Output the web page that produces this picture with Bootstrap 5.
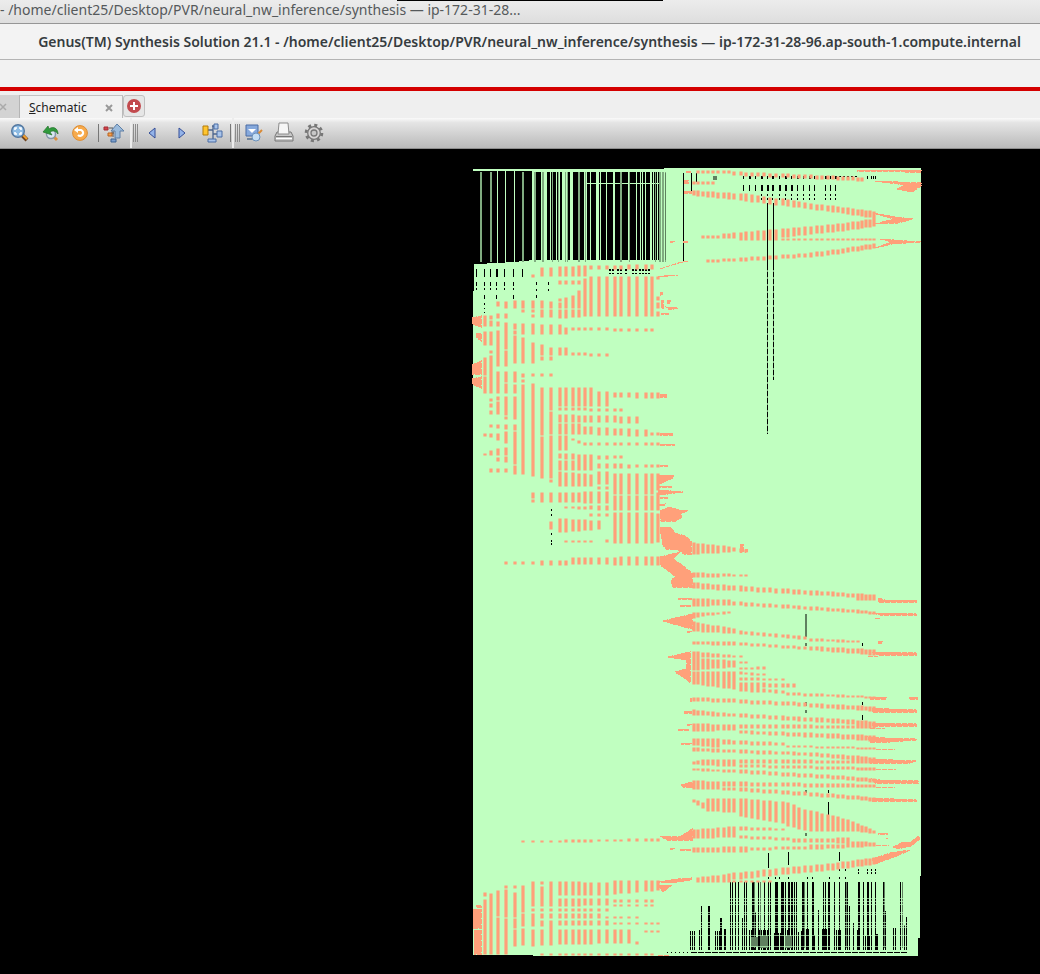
<!DOCTYPE html>
<html lang="en">
<head>
<meta charset="utf-8">
<meta name="viewport" content="width=device-width, initial-scale=1">
<title>Genus(TM) Synthesis Solution 21.1</title>
<link href="https://cdn.jsdelivr.net/npm/bootstrap@5.3.0/dist/css/bootstrap.min.css" rel="stylesheet">
<style>
body{background:#000;font-family:"Noto Sans","Open Sans",sans-serif;color:#2e3436}
.back-title{height:24px;background:linear-gradient(#ececec,#dedede);border-bottom:1px solid #969696;font-size:14px;line-height:20px;color:#55595b}
.top-edge{left:397px;top:0;width:266px;height:1px;background:#000}
.win-title{height:36px;background:#f3f3f3;border-bottom:1px solid #b4b4b4;font-size:14px;line-height:36px;font-weight:600;color:#363c3f;padding-left:19px}
.menu-strip{height:27px;background:#f2f2f2}
.tab-strip{height:31px;border-top:4px solid #d40000;background:#efefef}
.old-tab{width:20px;background:#d3d3d3;border-right:1px solid #b5b5b5;margin-top:4px;color:#aaa}
.cur-tab{width:103px;margin-top:4px;background:#f1f1f1;border-top:1px solid #c2c2c2;border-right:1px solid #bbb;font-size:12px;line-height:24px;padding-left:9px;color:#222}
.tool{background:none;border:0;padding:0;width:30px;height:28px;display:flex;align-items:center;justify-content:center;flex:none}
.cur-tab .tool{width:10px;height:23px}
.tab-strip .add-tab{width:22px;height:22px;border:1px solid #c0c0c0;border-radius:3px;background:#e6e6e6;margin:4px 0 0 0}
.tool-strip{height:31px;background:linear-gradient(#fafafa,#e5e5e5 15%,#b9b9b9);border-bottom:1px solid #8d8d8d;padding-left:5px}
.sep{width:1px;height:18px;margin-left:3px;background:#777;flex:none}
.grip{width:5px;height:18px;margin:0 -1px 0 1px;border:solid #8c8c8c;border-width:0 1px;background:linear-gradient(90deg,transparent 1px,#8c8c8c 1px,#8c8c8c 2px,transparent 2px);flex:none}
.edge{width:2px;height:30px;margin-left:1px;background:#ececec;flex:none}
</style>
</head>
<body>
<header>
  <div class="back-title position-relative overflow-hidden">
    <div class="text-nowrap">- /home/client25/Desktop/PVR/neural_nw_inference/synthesis — ip-172-31-28...</div>
    <div class="top-edge position-absolute"></div>
  </div>
  <h1 class="win-title text-center text-nowrap overflow-hidden m-0">Genus(TM) Synthesis Solution 21.1 - /home/client25/Desktop/PVR/neural_nw_inference/synthesis — ip-172-31-28-96.ap-south-1.compute.internal</h1>
  <div class="menu-strip"></div>
  <nav class="tab-strip d-flex" aria-label="Views">
    <div class="old-tab d-flex align-items-center"><svg width="8" height="22"><path d="M0 8l6 6M6 8l-6 6" stroke="#aaa" stroke-width="1.5"/></svg></div>
    <div class="cur-tab d-flex justify-content-between pe-2 me-0"><span><u>S</u>chematic</span>
      <button class="tool" aria-label="Close tab"><svg width="8" height="8"><path d="M1 1l6 6M7 1l-6 6" stroke="#999" stroke-width="2"/></svg></button></div>
    <button class="tool add-tab" aria-label="Add tab"><svg width="16" height="16"><circle cx="8" cy="8" r="7" fill="#c24a4e"/><path d="M8 4v8M4 8h8" stroke="#fff" stroke-width="2"/></svg></button>
  </nav>
  <div class="tool-strip d-flex align-items-center" role="toolbar" aria-label="Schematic tools">
    <button class="tool" aria-label="Zoom fit"><svg width="20" height="20"><path d="M12 12l5 5" stroke="#6e4420" stroke-width="4"/><path d="M12 11l5 5" stroke="#f0a030" stroke-width="2"/><circle cx="8" cy="8" r="6.3" fill="#8dbbe3" stroke="#53779f" stroke-width="1.4"/><path d="M5 7V5h2M9 5h2v2M11 9v2H9M7 11H5V9" fill="none" stroke="#fff" stroke-width="1.6"/></svg></button>
    <button class="tool" aria-label="Zoom previous"><svg width="20" height="20"><path d="M13 13l4 4" stroke="#db9040" stroke-width="3"/><circle cx="11" cy="11" r="4.5" fill="#d9e6f2" stroke="#8597aa" stroke-width="1.5"/><path d="M3 9l5-6 1 3c4-3 9-1 9 5-2-3-5-4-8-2l2 3z" fill="#2f9a3c" stroke="#28732e" stroke-width=".7"/></svg></button>
    <button class="tool" aria-label="Redraw"><svg width="18" height="18"><circle cx="9" cy="9" r="7.4" fill="#f7aa4c" stroke="#dc8d34"/><path d="M6 6h4a3 3 0 1 1-3 5" fill="none" stroke="#fff" stroke-width="2.2"/><path d="M3 6l4-3v6z" fill="#fff"/></svg></button>
    <span class="sep"></span>
    <button class="tool" aria-label="Up hierarchy"><svg width="22" height="22"><path d="M6 6h4v9M8 11h3" fill="none" stroke="#555"/><path d="M14 2l7 7h-4v7h-5V9H8z" fill="#9bbbdc" stroke="#5f7fa5"/><path d="M1 5h4v3H1z" fill="#d5424a" stroke="#a12c33"/><path d="M5 11h4v3H5z" fill="#f4a24a" stroke="#b96222"/><path d="M8 17h5v3H8z" fill="#7d9fce" stroke="#3e6494"/></svg></button>
    <span class="edge"></span><span class="grip"></span>
    <button class="tool" aria-label="Back"><svg width="10" height="14"><path d="M8 2v10L2 7z" fill="#93b3e8" stroke="#354f98"/></svg></button>
    <button class="tool" aria-label="Forward"><svg width="10" height="14"><path d="M2 2v10l6-5z" fill="#93b3e8" stroke="#354f98"/></svg></button>
    <button class="tool" aria-label="Hierarchy"><svg width="22" height="22"><path d="M6 8h6M12 4v14M11 4h4M12 12h4" fill="none" stroke="#4c658e" stroke-width="1.3"/><path d="M2 4h5v9H2z" fill="#ffc52f" stroke="#b57d08"/><path d="M13 2h4v5h-4zM16 9h5v6h-5zM7 17h8v3H7z" fill="#a9c4ea" stroke="#4b6da4"/></svg></button>
    <span class="sep"></span><span class="edge"></span><span class="grip"></span>
    <button class="tool" aria-label="Inspect"><svg width="20" height="20"><path d="M2 2h12v11H2z" fill="#86a9dc" stroke="#4b6da4"/><path d="M4 6h8l-4 4z" fill="#fff"/><path d="M3 15h7v2H3z" fill="#72869e"/><path d="M14 11l4-4" stroke="#d98a35" stroke-width="2"/><circle cx="12" cy="14" r="4" fill="#c4def4" stroke="#6c91ba"/></svg></button>
    <button class="tool" aria-label="Print"><svg width="22" height="22"><path d="M4 10h14l2 4v5H2v-5z" fill="#c8c8c8" stroke="#777"/><path d="M6 1h9l1 11H5z" fill="#f6f6f6" stroke="#8c8c8c"/><path d="M3 14.500h16" stroke="#777"/><path d="M3 16.500h16" stroke="#fff"/></svg></button>
    <button class="tool" aria-label="Settings"><svg width="20" height="20"><circle cx="10" cy="10" r="7.800" fill="none" stroke="#777" stroke-width="3" stroke-dasharray="3 3.126"/><circle cx="10" cy="10" r="6.300" fill="#d6d4d4" stroke="#777" stroke-width="1.3"/><circle cx="10" cy="10" r="3" fill="#c7c7c7" stroke="#777" stroke-width="1.3"/></svg></button>
  </div>
</header>
<main>
<svg id="schematic" class="d-block w-100" viewBox="0 149 1040 825" role="img" aria-label="Synthesised netlist schematic">
  <path fill="#c0ffc0" shape-rendering="crispEdges" d="M473 169H664V168H921V877H920V938H918V956H533V955H473V291H474V264L500 263 525 261 532 260H665V172H532V171H473Z"/>
  <path id="trunks" fill="#c0ffc0" shape-rendering="crispEdges"/>
  <path id="trunksDim" fill="#80ab80" shape-rendering="crispEdges"/>
  <path id="wires" fill="#000" shape-rendering="crispEdges"/>
  <path id="wiresDim" fill="#5f805f" shape-rendering="crispEdges"/>
  <path id="gaps" fill="#c0ffc0" fill-opacity=".65" shape-rendering="crispEdges"/>
  <path id="cells" fill="#ffa07a" stroke="#ffa07a" stroke-width="1.200"/>
  <path id="clusters" fill="#ffa07a" stroke="#ffa07a" stroke-width="1" stroke-dasharray="5 1" shape-rendering="crispEdges"/>
</svg>
</main>
<script>
const box=(x,y,w,h)=>`M${x} ${y}h${w}v${h}h${-w}z`;
const put=(id,d)=>document.getElementById(id).setAttribute('d',d);
// x of each placement column, left and right half
const L=[484,490,497,505,514,522,532,541,550,559,565,572,578,584,590,598,606,614,620,628,636,645,651,657];
const R=[693,697,702,707,712,717,723,728,733,740,745,751,757,763,769,775,782,787,793,798,804,810,816,821,827,832,837,842,847,852,857,861,865,869,873];
let cells='';
// cells listed column by column: top-bottom
const stacks=[
'316-326 332-345 358-375 377-393 434-436 454-455 893-896 900-954',
'316-319 321-326 332-345 351-353 356-393 399-401 404-407 411-414 425-427 434-437 451-455 469-472 894-954',
'302-306 314-318 322-326 331-350 351-366 372-393 397-400 402-414 425-428 434-440 449-455 458-461 469-472 891-916 918-954',
'302-308 314-318 323-349 351-366 372-382 384-393 397-415 417-419 425-429 432-443 448-455 457-462 469-472 886-888 890-917 919-954',
'301-308 324-329 331-334 336-363 372-379 380-382 385-393 397-419 425-430 432-447 448-464 466-474 886-888 893-917 919-928 930-946',
'301-308 310-312 324-334 338-363 374-377 380-382 385-395 396-474 886-912 914-926 929-945',
'275-277 301-308 310-312 315-317 324-334 343-363 374-376 384-398 399-476 493-498 500-502 882-906 909-911 914-926 930-946',
'268-276 301-308 310-317 325-334 345-355 357-360 374-376 388-435 437-478 493-502 882-884 887-906 909-911 914-918 921-926 930-945',
'268-276 302-308 310-317 325-334 348-355 357-360 374-376 388-406 407-410 412-434 436-453 454-478 480-482 493-502 522-529 882-906 909-911 914-918 921-945'];
stacks.forEach((s,i)=>s.split(' ').forEach(p=>{const[a,b]=p.split('-').map(Number);cells+=box(L[i],a,2,b-a)}));
// rows of cells: first column, last column, top and bottom at each end
const row=(X,[a,b,t0,b0,t1,b1])=>{for(let i=a;i<=b;i++){const k=b>a?(i-a)/(b-a):0,t=Math.round(t0+(t1-t0)*k),e=Math.round(b0+(b1-b0)*k);cells+=box(X[i],t,2,Math.max(1,e-t))}};
[[9,13,267,276,266,276],[14,22,266,269,265,269],[9,12,281,284,281,284],[13,13,279,310,0,0],[12,12,291,308,0,0],[9,11,299,301,296,308],[9,12,303,308,303,308],[14,22,277,316,277,316],[23,23,277,279,0,0],[9,13,310,318,310,316],[23,23,297,300,0,0],[23,23,303,308,0,0],[23,23,312,316,0,0],
[9,10,325,334,328,334],[11,22,328,330,329,331],[9,10,348,355,348,355],[11,16,353,355,354,356],[9,14,388,406,388,406],[15,16,392,406,392,406],[17,23,393,397,393,398],[9,18,408,410,409,411],[9,14,415,422,416,422],[15,20,416,422,417,423],[9,12,424,434,424,434],[13,21,427,434,430,436],[9,10,436,450,436,450],[11,13,439,440,443,445],[14,23,443,445,443,445],[22,23,433,435,433,435],[9,14,454,458,455,461],[15,18,456,459,456,458],[9,14,461,470,461,470],[15,23,464,468,465,467],[9,14,472,486,475,486],[15,16,472,484,472,484],
[15,16,487,489,487,489],[9,16,493,502,492,503],[10,16,507,508,506,510],[14,16,514,516,514,516],[9,15,519,532,521,529],[10,14,541,542,541,542],[16,18,540,542,540,542],[17,22,474,494,474,494],[17,22,496,510,496,510],[17,22,513,543,513,543],[23,23,474,490,0,0],[23,23,493,510,0,0],[23,23,514,542,0,0],
[3,10,562,564,561,565],[11,23,558,564,557,565],[5,23,841,842,839,841],[9,16,882,895,883,895],[17,23,881,894,881,890],[9,16,899,906,899,905],[9,16,909,911,909,911],[9,15,914,918,914,918],[9,16,921,925,921,925],[9,19,930,944,930,943],[17,22,900,902,900,902],[17,22,905,906,905,906],[16,20,917,918,917,918],[17,20,923,924,923,924],[21,23,923,924,923,924],[20,20,942,944,0,0],[21,23,931,932,931,932],[7,22,954,955,954,955]
].forEach(r=>row(L,r));
[[1,7,171,173,171,173],[8,31,172,175,178,181],[0,4,182,184,182,184],[0,9,191,195,194,200],[10,20,194,201,203,208],[21,34,204,209,212,218],[2,5,236,238,236,238],[6,14,234,238,230,239],[15,24,230,238,225,232],[25,34,225,232,219,226],[9,34,239,240,239,240],[3,8,260,262,259,261],[9,20,258,261,254,257],[21,34,253,257,244,248],
[0,7,543,554,547,552],[8,10,548,551,550,552],[0,10,573,577,575,576],
[0,29,583,588,594,597],[30,34,594,600,595,600],[0,7,599,606,600,605],[8,34,602,605,612,614],[0,2,613,618,613,616],[3,7,613,615,612,613],[0,8,622,631,629,633],[9,20,631,634,637,639],[21,30,639,641,641,642],[0,8,642,644,642,645],[9,20,643,645,647,649],[21,34,647,650,650,655],
[0,9,652,657,656,657],[2,8,659,669,661,667],[0,1,658,670,658,670],[0,1,672,684,672,684],[2,8,672,685,672,689],[9,10,662,663,662,663],[9,13,668,669,667,669],[9,13,672,674,674,675],[9,16,678,680,679,680],[9,18,683,687,684,687],[9,16,686,691,691,693],[17,34,693,695,697,698],
[0,8,698,701,699,702],[9,20,700,703,703,706],[21,34,704,707,707,711],[0,8,710,715,714,716],[9,34,714,717,722,726],[0,8,724,731,725,730],[9,34,725,728,726,728],[9,34,731,733,736,741],[0,5,739,745,739,747],[6,16,740,744,743,745],[17,34,746,747,748,749],[0,8,748,751,750,752],[9,20,750,753,753,755],[21,34,753,756,758,762],
[0,1,762,764,761,764],[2,8,760,765,760,766],[9,34,760,763,761,763],[9,34,765,767,768,770],[0,8,769,770,770,772],[9,34,770,773,779,782],[0,5,781,789,782,789],[6,34,782,786,785,787],[3,8,787,789,788,790],[9,34,788,791,798,801],[0,3,800,802,804,811],[3,8,799,811,799,812],[9,16,799,816,802,823],[17,20,803,826,810,830],[21,28,811,831,820,831],[29,34,822,831,831,833],
[0,8,830,838,827,837],[9,16,827,830,829,830],[9,34,836,838,843,845],[0,10,848,852,847,852],[9,20,848,850,847,849],[18,28,840,842,838,842],[21,34,845,849,844,846],[1,6,878,881,875,881],[7,20,874,880,866,872],[21,34,866,872,858,864],[1,14,881,882,881,882]
].forEach(r=>row(R,r));
put('cells',cells);
// tightly packed clusters and the tails that reach the ports
put('clusters',`M472 318L481 316V327L472 324ZM476 333H481V341L476 337ZM472 365L481 361V374H472ZM472 379L481 377V388L472 384ZM476 905H481V907H476ZM473 909H481V928H473ZM474 930H481V954H474Z
M660 394H666V397H660ZM660 433H672V435H660ZM660 444H674V445H660ZM660 465H667V466H660ZM658 475H673V478L662 483H658ZM658 486H671V487H658ZM658 490L683 492 660 495ZM660 497H667V498H660ZM657 505L665 504 664 506Z
M660 511L669 507 679 510 688 511 680 514 682 517 676 521 661 521ZM660 528L670 527 675 533 685 536 691 541V554H684L678 550 666 549 663 545ZM660 557L680 552 673 559 678 562 692 573V587H673L671 580 676 577 666 569 660 565ZM740 544h3v8h-3zM745 549h2v3h-2z
M678 598H691V599H678ZM680 605H691V606H680ZM663 621L692 614V629L677 625ZM687 631H691V632H687ZM668 657L690 652V683L686 679 675 672 686 669 687 660ZM690 698h1v3h-1zM684 711H691V713H684ZM687 724H691V725H687ZM678 729H689V730H678ZM681 743H691V744H681ZM681 785L692 782V788L683 787ZM660 836L680 837 692 829V840L667 840ZM670 848h4v1h-4zM680 849h11v1h-11z
M658 882L678 879 691 878V880L670 883ZM658 885H672L663 892ZM658 955H670M658 277L668 275 678 276M660 292h2v3h-2zM661 300h2v8h-2zM667 300h3v3h-3zM666 307L678 308 669 310ZM661 313H668V314H661ZM660 269L678 263 688 261M670 241h4v1h-4zM683 241h5v1h-5zM684 180h4v3h-4zM684 191h7v2h-7zM686 171h5v1h-5z
M857 170H905V171H857ZM905 170H921V172H905ZM875 181L921 183V186L912 192 897 189 905 185ZM873 213L895 217 913 219 898 223 875 224 894 219ZM880 239L921 242 892 244 875 248 892 242Z
M878 598L885 600 916 600V602H878ZM872 613L890 613 916 614V615H880ZM875 618h5M878 641h4v2h-4zM872 652L885 652 916 653V655H878ZM868 656h10M870 697h16v2h-16zM909 697H917V699H909ZM872 708L890 709 916 710V712H872ZM872 723L916 724V726H872ZM870 728h15M868 737L885 738 916 739V740L890 742H870ZM876 749h19M870 759L916 761 910 763 870 763ZM876 769h20M872 779L880 780 918 781V783H875ZM876 787h19M872 798L916 800V801H872ZM878 833h9v1h-9zM876 845h13M886 838h2M893 847L903 842 911 842 919 836V840L911 846 898 849ZM872 859L890 853 910 850 897 856 875 864Z`);
// bright and dim trunk nets across the upper left
let d='';[[497,1],[505,1],[514,1],[532,2],[541,1],[544,3],[550,1],[556,1],[559,1],[562,3],[566,1],[570,3],[584,1],[586,1],[590,1],[596,3],[600,1],[606,1],[613,2],[628,1],[636,1],[640,1],[642,1],[645,1],[650,2],[653,1],[657,1],[661,1],[664,1]].forEach(([x,w])=>d+=box(x,171,w,92));
put('trunks',d+box(586,183,80,1));
d='';[[480,2],[490,2],[522,2],[534,2],[542,2],[552,1],[558,1],[565,1],[567,1],[578,2],[585,1],[620,2],[629,1],[655,1],[659,2],[662,2],[665,1]].forEach(([x,w])=>d+=box(x,172,w,90));
put('trunksDim',d);
// black nets and their broken continuations
d=box(683,173,1,88)+box(691,173,1,18)+box(696,173,1,9)+box(767,203,1,231)+box(773,203,1,177)+box(828,802,1,13)+box(828,790,1,3)+box(768,853,1,15)+box(788,852,1,13)+box(839,852,1,9)+box(862,702,1,3)+box(862,715,1,5)+box(862,643,1,3);
[743,749,755,761,767,772,779,785,791,797,803,809,814,825,830,835].forEach((x,i)=>{d+=box(x,185,i>2&&i<9?2:1,6)+box(x,176,i%2+1,3)+(i>2?box(x,194,1,2)+box(x,198,1,2):'')});
for(let x=839;x<858;x+=4)d+=box(x,176,2,1);
[867,871,873,875].forEach(x=>d+=box(x,176,1,3));
[476,484,490,496,504,513,522].forEach((x,i)=>{d+=box(x,269,i==3?2:1,8);if(i<6)d+=box(x,282,1,4)+box(x,288,1,2);if([1,3,5].includes(i))d+=box(x,295,1,4);if(i==1)d+=box(x,303,1,2)+box(x,308,1,1)+box(x,312,1,1)});
[536,548].forEach((x,i)=>d+=box(x,282,1,3)+box(x,289,1,2)+(i?'':box(x,295,1,3)));
[609,612,617,620,625,632,635,639,642,645,648].forEach(x=>d+=box(x,269,2,2)+box(x,273,2,1));
[509,514,533,540,543].forEach(y=>d+=box(551,y,1,2));
[768,775,779,788,807,812,829,839,845,858,867,871,875].forEach((x,i)=>d+=box(x,i>8?872:877,1,2)+(i>6?box(x,869,1,2):''));
// dense bank at the bottom right
[[730,1],[732,1],[735,1],[738,1],[744,1],[746,1],[752,2],[758,1],[764,1],[768,1],[770,1],[775,3],[781,3],[785,1],[788,2],[791,2],[794,1],[796,1],[802,2],[807,1],[812,2],[823,1],[825,1],[828,2],[834,1],[839,1],[845,1],[847,1],[858,2],[863,1],[867,2],[871,1],[875,1],[883,1],[900,1]].forEach(([x,w])=>d+=box(x,882,w,68));
[[701,1,906],[708,2,906],[720,2,918],[690,1,931],[692,1,931],[694,1,931],[699,4,930],[715,6,931],[724,2,929],[742,1,918],[749,8,930],[754,2,912],[759,9,930],[774,8,933],[783,9,930],[794,5,932],[801,3,931],[806,4,929],[812,3,935],[818,1,910],[822,7,929],[834,8,930],[845,6,929],[849,1,906],[853,1,923],[857,4,930],[865,8,936],[876,2,934],[885,1,911],[893,4,928],[904,1,925],[906,1,917]].forEach(([x,w,y])=>{for(let i=0;i<w;i+=w>3?2:w)d+=box(x+i,y,w>3?1:w,950-y)});
for(let x=667;x<908;x+=x<690?4:7)d+=box(x,952,x<690?1:6,1);
put('wires',d+box(920,876,1,62));
d=[898,901,904,912,914,922,925,927,935,946].map(y=>box(686,y,224,1)).join('');
for(let y=270;y<434;y+=7)d+=box(767,y,7,2);
put('gaps',d);
d=[754,760,804,846,884,902].map(x=>box(x,882,1,66)).join('');
for(let i=0;i<7;i++)d+=box(751+i,937,1,10)+box(761+i,936,1,12)+box(785+i,936,1,12);
put('wiresDim',d+box(665,173,1,87)+box(805,614,2,23)+box(805,643,2,3)+box(805,702,2,4)+box(805,710,2,3)+box(805,790,2,3)+box(805,833,2,3)+box(713,176,4,4));
</script>
<script src="https://cdn.jsdelivr.net/npm/bootstrap@5.3.0/dist/js/bootstrap.bundle.min.js"></script>
</body>
</html>
